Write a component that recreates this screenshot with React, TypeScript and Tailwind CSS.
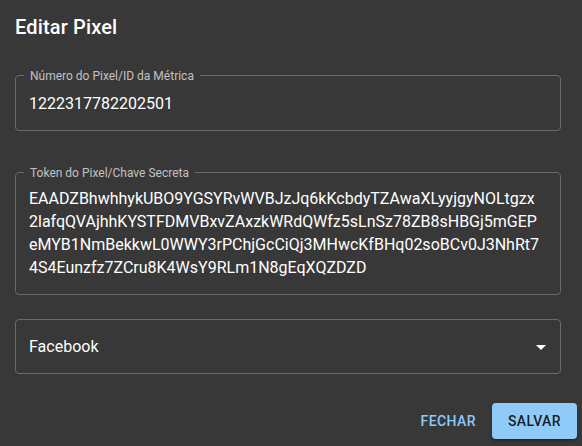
import React from "react";

const tokenLines = [
  "EAADZBhwhhykUBO9YGSYRvWVBJzJq6kKcbdyTZAwaXLyyjgyNOLtgzx",
  "2lafqQVAjhhKYSTFDMVBxvZAxzkWRdQWfz5sLnSz78ZB8sHBGj5mGEP",
  "eMYB1NmBekkwL0WWY3rPChjGcCiQj3MHwcKfBHq02soBCv0J3NhRt7",
  "4S4Eunzfz7ZCru8K4WsY9RLm1N8gEqXQZDZD",
];

function Label({ children }: { children: React.ReactNode }) {
  return (
    <span className="absolute left-[8px] top-0 -translate-y-1/2 bg-[#383838] px-[6px] text-[12px] leading-[14px] text-[#c2c2c2]">
      {children}
    </span>
  );
}

export default function App() {
  return (
    <div
      className="w-[582px] h-[446px] overflow-hidden bg-[#383838] text-white"
      style={{ fontFamily: "Roboto, 'Liberation Sans', sans-serif" }}
    >
      <div className="pl-[15px] pr-[21px] flex flex-col">
        <h2 className="mt-[11px] h-[32px] text-[20px] leading-[32px] font-medium tracking-[0.15px] text-white">
          Editar Pixel
        </h2>

        <div className="relative mt-[32px] h-[56px] rounded-[4px] border border-[#6b6b6b]">
          <Label>Número do Pixel/ID da Métrica</Label>
          <div className="px-[13px] pt-[15.5px] text-[16px] leading-[23px] text-white">
            1222317782202501
          </div>
        </div>

        <div className="relative mt-[41px] h-[123px] rounded-[4px] border border-[#6b6b6b]">
          <Label>Token do Pixel/Chave Secreta</Label>
          <div className="px-[13px] pt-[13.5px] text-[16px] leading-[23.3px] text-white">
            {tokenLines.map((l) => (
              <div key={l} className="whitespace-nowrap">
                {l}
              </div>
            ))}
          </div>
        </div>

        <div className="relative mt-[24px] h-[55px] rounded-[4px] border border-[#6b6b6b] flex items-center">
          <div className="pl-[13px] text-[16px] leading-[23px] text-white flex-1">Facebook</div>
          <svg
            viewBox="0 0 24 24"
            className="w-[24px] h-[24px] mr-[7px] fill-white"
          >
            <path d="M7 10l5 5 5-5z" />
          </svg>
        </div>

        <div className="mt-[29px] -mr-[16px] flex justify-end items-center gap-[8px]">
          <button className="h-[36px] px-[8px] rounded-[4px] text-[14px] font-medium tracking-[0.4px] uppercase text-[#90caf9]">
            Fechar
          </button>
          <button className="h-[36px] px-[16px] rounded-[4px] bg-[#90caf9] text-[14px] font-medium tracking-[0.4px] uppercase text-[rgba(0,0,0,0.87)] shadow-[0_3px_1px_-2px_rgba(0,0,0,0.2),0_2px_2px_0_rgba(0,0,0,0.14),0_1px_5px_0_rgba(0,0,0,0.12)]">
            Salvar
          </button>
        </div>
      </div>
    </div>
  );
}
